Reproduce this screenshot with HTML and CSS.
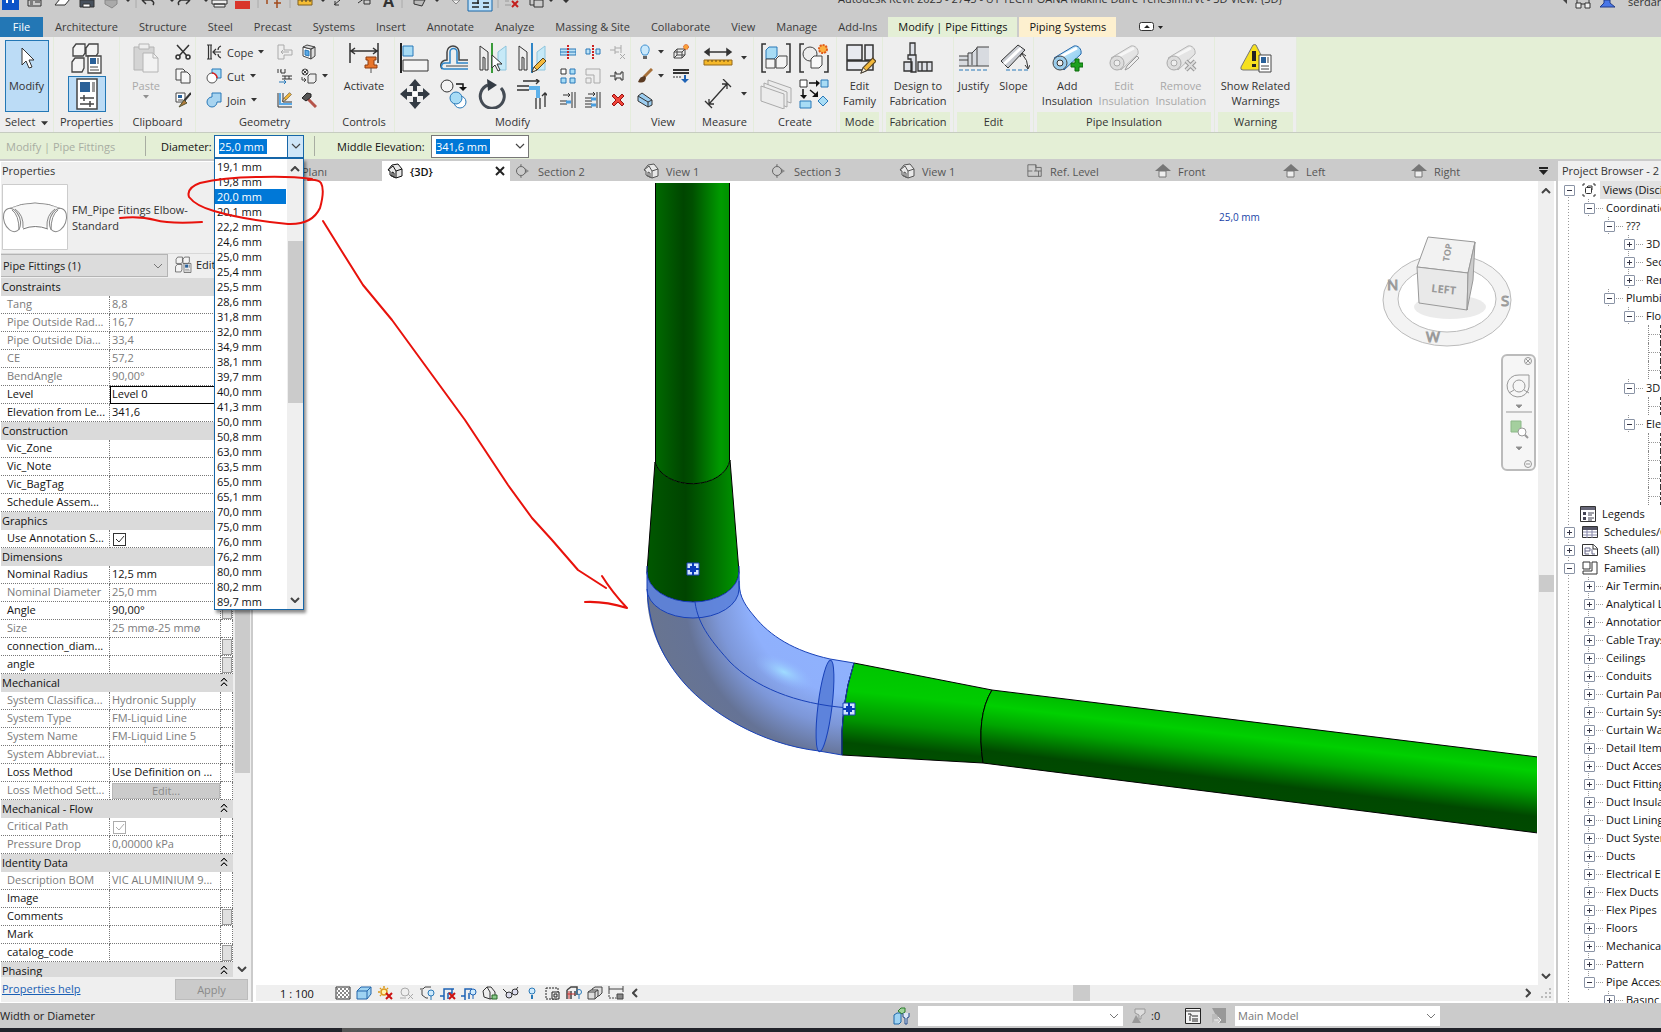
FILE: index.html
```html
<!DOCTYPE html>
<html lang="en">
<head>
<meta charset="utf-8">
<title>Autodesk Revit 2023</title>
<link rel="stylesheet" href="styles.css">
</head>
<body>
<svg class="defs" aria-hidden="true">
  <defs>
    <linearGradient id="pv" x1="0" x2="1" y1="0" y2="0"><stop offset="0" stop-color="#006a00"/><stop offset=".38" stop-color="#004600"/><stop offset=".5" stop-color="#005000"/><stop offset=".88" stop-color="#009c00"/><stop offset="1" stop-color="#009000"/></linearGradient>
    <linearGradient id="tv" x1="0" x2="1" y1="0" y2="0"><stop offset="0" stop-color="#005800"/><stop offset=".42" stop-color="#004400"/><stop offset=".6" stop-color="#005c00"/><stop offset="1" stop-color="#009800"/></linearGradient>
    <linearGradient id="ph" gradientUnits="userSpaceOnUse" x1="1000" y1="541" x2="991" y2="616"><stop offset="0" stop-color="#00bc00"/><stop offset=".2" stop-color="#00d000"/><stop offset=".45" stop-color="#00a400"/><stop offset=".8" stop-color="#004800"/><stop offset="1" stop-color="#004a00"/></linearGradient>
    <linearGradient id="th" gradientUnits="userSpaceOnUse" x1="668" y1="488" x2="658" y2="584"><stop offset="0" stop-color="#00c400"/><stop offset=".3" stop-color="#00cc00"/><stop offset=".6" stop-color="#009400"/><stop offset=".84" stop-color="#004c00"/><stop offset="1" stop-color="#005000"/></linearGradient>
    <radialGradient id="el" gradientUnits="userSpaceOnUse" cx="598" cy="408" r="210"><stop offset="0" stop-color="#8fb4ff"/><stop offset=".5" stop-color="#8fb0fc"/><stop offset=".65" stop-color="#7d97d8"/><stop offset=".8" stop-color="#657396"/><stop offset="1" stop-color="#69758f"/></radialGradient>
    <radialGradient id="hl"><stop offset="0" stop-color="#9fdcff"/><stop offset="1" stop-color="#93b8ff" stop-opacity="0"/></radialGradient>
    <linearGradient id="bl" x1="0" x2="1" y1="0" y2="1"><stop offset="0" stop-color="#d4f0fc"/><stop offset="1" stop-color="#7cc4ee"/></linearGradient>
    <symbol id="chev" viewBox="0 0 10 6"><path d="M1 1l4 4 4-4" fill="none" stroke="#444" stroke-width="1.2"/></symbol>
    <symbol id="chevb" viewBox="0 0 10 6"><path d="M1 1l4 4 4-4" fill="none" stroke="#444" stroke-width="2"/></symbol>
    <symbol id="arr" viewBox="0 0 6 4"><path d="M0 0h6L3 3.500z" fill="#333"/></symbol>
    <symbol id="dbl" viewBox="0 0 8 10"><path d="M1 4l3-3 3 3M1 8.500l3-3 3 3M1 4.500l3-3 3 3M1 9l3-3 3 3" fill="none" stroke="#111" stroke-width=".9"/></symbol>
    <symbol id="house3" viewBox="0 0 16 16"><path d="M1 7l4-5 6-1 4 5v7l-6 2-6-3V8z" fill="#e8e8e8" stroke="currentColor"/><path d="M1 7l5-4 3 5v7M9 8l6-2M5 14V9l2 1v5" fill="none" stroke="currentColor"/></symbol>
    <symbol id="sect" viewBox="0 0 16 16"><path d="M5 2l9 6-9 6z" fill="#8c8c8c"/><circle cx="6" cy="8" r="4.500" fill="#ccc" stroke="#666"/><path d="M6 1v3M6 12v3" stroke="#777"/></symbol>
    <symbol id="plan" viewBox="0 0 18 16"><path d="M1 1h9v3h6v10H1zM10 1v7M1 8h5M13 8v6M8 8h8" fill="none" stroke="#666"/></symbol>
    <symbol id="elev" viewBox="0 0 16 16"><path d="M0 8l8-7 8 7z" fill="#777"/><path d="M4 8h7v6H4z" fill="#eee" stroke="#777"/></symbol>
    <symbol id="pencil" viewBox="0 0 16 16"><path d="M1 15l2-5L12 1l3 3-9 9z" fill="#f3b93c" stroke="#5a4420"/><path d="M1 15l2-5 3 3z" fill="#fff2d8" stroke="#333" stroke-width=".8"/></symbol>
    <symbol id="pipe" viewBox="0 0 32 32"><path d="M3 14L23 2c4-1 8 3 7 8L13 26z" fill="url(#bl)" stroke="#2467ab"/><path d="M9 13L26 4" stroke="#fff" stroke-width="3"/><circle cx="9" cy="19" r="7" fill="#9bcdec" stroke="#444"/><circle cx="9" cy="19" r="3" fill="#eee" stroke="#333"/></symbol>
    <symbol id="pipeg" viewBox="0 0 32 32"><path d="M3 14L23 2c4-1 8 3 7 8L13 26z" fill="#e4e4e4" stroke="#b5b5b5"/><path d="M9 13L26 4" stroke="#f6f6f6" stroke-width="3"/><circle cx="9" cy="19" r="7" fill="#ddd" stroke="#aaa"/><circle cx="9" cy="19" r="3" fill="#eee" stroke="#aaa"/></symbol>
    <symbol id="blocks" viewBox="0 0 32 32"><path d="M2 6l3-4h9v9l-2 3H2zM15 6l3-4h9v9l-2 3H15zM1 20l3-4h9v10l-2 4H1z" fill="#f4f4f4" stroke="#444" stroke-width="1.300"/><path d="M17 14h13v17H17z" fill="#fff" stroke="#444" stroke-width="1.300"/><path d="M19 16h6v6h-6z" fill="#2a6199"/><path d="M26 16h2v6h-2z" fill="#999"/><path d="M19 25h8M19 28h9" stroke="#444"/></symbol>
  </defs>
</svg>

<header class="titlebar">
  <div class="quick">
    <svg width="570" height="17" viewBox="0 0 570 17" fill="none" stroke="#333">
      <path d="M2 0h17v10H2z" fill="#0a53c8" stroke="none"/><path d="M7 0v3M13 0v3" stroke="#fff" stroke-width="2"/>
      <path d="M28 0h13v6H28zM30 2h3M35 2h5M30 4h3"/><path d="M55 5l5-6h10l-5 6z" fill="#fff"/><path d="M80 0h14v7H80z" fill="#47505c"/><path d="M83 4h7v3h-7z" fill="#fff"/>
      <path d="M105 0h12v4l-5 4-7-4z" fill="#aaa" stroke="#888"/><path d="M142 0l4-4M142 0l4 4M143 0h8q4 2 2 5M190 0l-4 4M189 0h-8q-4 2-2 5" stroke-width="1.500"/>
      <path d="M212 0h15v4h-15zM214 4h11v3h-11z" fill="#eee"/><path d="M235 1h15v8h-15z" fill="#d9352b" stroke="none"/>
      <path d="M267 0v4M277 0v4M274 3h7M277 3v5" stroke="#a34b1c" stroke-width="1.500"/><path d="M298 0h14v5h-14z" fill="#f5bd35" stroke="#806020"/><path d="M302 0v2M306 0v2M310 0v2"/>
      <path d="M334 5l6-5M335 1v4h4M358 3l7-5M364 0h6v4h-6z"/><path d="M414 0h11l-3 6-8-2z" fill="#bbb"/><path d="M452 0l4 4 4-4z" fill="#eee" stroke="#888"/>
      <path d="M468-2h24v13h-24z" fill="#bfe0f8" stroke="#1666a8"/><path d="M472 3h7M483 3h6M472 7h7M483 7h6M478 0v4" stroke="#222" stroke-width="1.500"/>
      <path d="M505 5h6M505 1h4" stroke="#999"/><path d="M512 1l6 6M518 1l-6 6" stroke="#c3201e" stroke-width="2"/><path d="M530-1v6h4M534 0h9v7h-9z"/>
      <path d="M126 0h4l-2 2zM170 0h4l-2 2zM204 0h4l-2 2zM321 0h4l-2 2zM435 0h4l-2 2zM549 0h4l-2 2zM563 0h6l-3 3z" fill="#333" stroke="none"/>
      <path d="M136 0v8M258 0v8M290 0v8M402 0v8M498 0v8" stroke="#aaa"/>
    </svg>
    <b class="qa-text">A</b>
  </div>
  <div class="doc-title">Autodesk Revit 2023 - 2745 - UT TECHPOANA Makine Daire Yenesimi.rvt - 3D View: {3D}</div>
  <div class="account">
    <svg width="54" height="12" viewBox="0 0 54 12"><path d="M4 0v4L0 0z" fill="#444"/><g fill="#eee" stroke="#333"><path d="M13 3h5v5h-5zM22 3h5v5h-5zM14 3V0M26 3V0M18 4h4"/></g><path d="M37 7l4-4V0h6v3l5 4z" fill="#4876e8" stroke="#223c88"/></svg>
    <span>serdar.d</span>
  </div>
</header>

<nav class="tabs">
  <button class="tab file">File</button>
  <button class="tab">Architecture</button><button class="tab">Structure</button><button class="tab">Steel</button><button class="tab">Precast</button><button class="tab">Systems</button><button class="tab">Insert</button><button class="tab">Annotate</button><button class="tab">Analyze</button><button class="tab">Massing &amp; Site</button><button class="tab">Collaborate</button><button class="tab">View</button><button class="tab">Manage</button><button class="tab">Add-Ins</button>
  <button class="tab active">Modify | Pipe Fittings</button>
  <button class="tab sys">Piping Systems</button>
  <button class="tab min" aria-label="Minimize ribbon"><svg width="25" height="10" viewBox="0 0 25 10"><rect x=".5" y=".5" width="14" height="8" rx="2" fill="#fff" stroke="#333"/><path d="M5 6h6L8 3zM19 4h5l-2.500 3z" fill="#222"/></svg></button>
</nav>

<section class="ribbon">
  <div class="group g-select">
    <div class="body"><button class="big on"><svg width="32" height="32" viewBox="0 0 32 32"><path d="M11 6v17l4-4 3 7 3-1-3-7h5z" fill="#fff" stroke="#333"/></svg><span>Modify</span></button></div>
    <div class="label">Select&nbsp; <svg width="7" height="5"><use href="#arr"/></svg></div>
  </div>
  <div class="group g-props">
    <div class="body stack"><button class="ic tall" aria-label="Type properties"><svg width="32" height="32"><use href="#blocks"/></svg></button>
      <button class="ic tall on" aria-label="Properties"><svg width="32" height="32" viewBox="0 0 32 32"><path d="M6 1h20v30H6z" fill="#fff" stroke="#444" stroke-width="1.500"/><path d="M9 4h10v10H9z" fill="#2a6199"/><path d="M21 4h3v10h-3z" fill="#999"/><path d="M9 20h14M9 26h14M13 17v6M19 23v6" stroke="#444" stroke-width="1.500"/></svg></button></div>
    <div class="label">Properties</div>
  </div>
  <div class="group g-clip">
    <div class="body"><button class="big dim"><svg width="32" height="32" viewBox="0 0 32 32"><path d="M4 5h20v23H4z" fill="#d4d4d4" stroke="#b4b4b4"/><path d="M9 2h10v5H9z" fill="#eee" stroke="#b4b4b4"/><path d="M13 11h10l5 5v14H13z" fill="#f2f2f2" stroke="#b4b4b4"/><path d="M23 11v5h5" fill="none" stroke="#b4b4b4"/></svg><span>Paste</span><svg class="under" width="6" height="4"><use href="#arr"/></svg></button>
      <div class="col">
        <button class="ic" aria-label="Cut to clipboard"><svg width="16" height="16" viewBox="0 0 16 16" fill="none" stroke="#333" stroke-width="1.500"><path d="M2 1l10 11M14 1L4 12"/><circle cx="3" cy="13" r="2"/><circle cx="13" cy="13" r="2"/></svg></button>
        <button class="ic" aria-label="Copy"><svg width="16" height="16" viewBox="0 0 16 16" fill="#f6f6f6" stroke="#444"><path d="M1 1h7l2 2v9H1z"/><path d="M6 4h6l3 3v8H6z"/></svg></button>
        <button class="ic" aria-label="Match type"><svg width="16" height="16" viewBox="0 0 16 16"><path d="M1 1h9v9H1z" fill="#fff" stroke="#444"/><path d="M3 3h4v3H3z" fill="#2a6199"/><path d="M3 8h5" stroke="#444"/><path d="M16 1L9 9" stroke="#333" stroke-width="2"/><path d="M9 8l-5 7 8-4z" fill="#b07a3a" stroke="#553"/></svg></button>
      </div></div>
    <div class="label">Clipboard</div>
  </div>
  <div class="group g-geo">
    <div class="body">
      <div class="col wide">
        <button class="txt"><svg width="16" height="16" viewBox="0 0 16 16" fill="none" stroke="#333" stroke-width="1.200"><path d="M1 1h5M1 15h5M2.500 1v14M5 1v14M15 2q-3 1-3 4M15 14q-3-1-3-4M7 8h8M10 5L7 8l3 3"/></svg><span>Cope</span><svg class="ar" width="6" height="4"><use href="#arr"/></svg></button>
        <button class="txt"><svg width="16" height="16" viewBox="0 0 16 16"><path d="M6 1h9v9H6z" fill="#a8dcf5" stroke="#2979b8"/><circle cx="6" cy="10" r="5" fill="#fff" stroke="#555"/><path d="M6 5a5 5 0 0 1 5 5" fill="none" stroke="#d22" stroke-width="1.500"/></svg><span>Cut</span><svg class="ar" width="6" height="4"><use href="#arr"/></svg></button>
        <button class="txt"><svg width="16" height="16" viewBox="0 0 16 16"><path d="M6 5V1h9v9h-4a5 5 0 1 1-5-5z" fill="#a8d4f0" stroke="#2979b8"/></svg><span>Join</span><svg class="ar" width="6" height="4"><use href="#arr"/></svg></button>
      </div>
      <div class="col">
        <button class="ic" aria-label="Join roof"><svg width="16" height="16" viewBox="0 0 16 16" fill="#eee" stroke="#aaa"><path d="M1 1h6v5h8v5H7v4H1z"/><path d="M12 8H4M6 6L4 8l2 2"/></svg></button>
        <button class="ic" aria-label="Beam joins"><svg width="16" height="16" viewBox="0 0 16 16" fill="none" stroke="#333"><path d="M1 1v4M4 1v4h4V1M3 3h1M5 8h10M5 11h10" /><path d="M2 14h7M7 12l2 2-2 2" stroke="#2979b8"/><path d="M8 8v3M12 8v3"/></svg></button>
        <button class="ic" aria-label="Wall joins"><svg width="16" height="16" viewBox="0 0 16 16"><path d="M1 1v14h14M6 1v9h9" stroke="#333" fill="none" /><path d="M3 1v11h12" stroke="#5aa9e6" stroke-width="2" fill="none"/><use href="#pencil" x="5" y="0" width="10" height="10"/></svg></button>
      </div>
      <div class="col mid">
        <button class="ic" aria-label="Split face"><svg width="16" height="16" viewBox="0 0 16 16" stroke="#444"><path d="M2 3l8 2v10l-8-3z" fill="#fff"/><path d="M2 3l4-2 8 2-4 2zM14 3v9l-4 3V5z" fill="#ddd"/><path d="M4 6l4 1v5l-4-1z" fill="#5aa9e6" stroke="#2979b8"/></svg></button>
        <button class="ic" aria-label="Demolish joins"><svg width="16" height="16" viewBox="0 0 16 16" fill="none" stroke="#444"><circle cx="4" cy="4" r="3"/><path d="M2 2l4 4M6 2L2 6M7 8l2-2h6v7l-2 2H7zM1 9v3h4M3 10l2 2-2 2"/></svg><svg class="ar" width="6" height="4"><use href="#arr"/></svg></button>
        <button class="ic" aria-label="Demolish"><svg width="16" height="16" viewBox="0 0 16 16"><path d="M7 7l8 8" stroke="#b5544a" stroke-width="3"/><path d="M1 6l5-5 4 1v3L5 9z" fill="#555" stroke="#222"/></svg></button>
      </div>
    </div>
    <div class="label">Geometry</div>
  </div>
  <div class="group g-ctl">
    <div class="body"><button class="big"><svg width="32" height="32" viewBox="0 0 32 32"><path d="M2 1v20M30 1v20M3 9h26M7 6L3 9l4 3M25 6l4 3-4 3" fill="none" stroke="#333" stroke-width="1.500"/><path d="M18 15h10v3h-2v5h3v3H17v-3h3v-5h-2z" fill="#e8762c" stroke="#8e3d10"/><path d="M23 26v5" stroke="#555"/></svg><span>Activate</span></button></div>
    <div class="label">Controls</div>
  </div>
  <div class="group g-mod">
    <div class="body">
      <div class="cells four">
        <button class="ic" aria-label="Align"><svg width="30" height="30" viewBox="0 0 30 30"><path d="M1 0v30" stroke="#222" stroke-width="2"/><path d="M3 3h10v10H3z" fill="#a8dcf5" stroke="#2979b8"/><path d="M3 17h25v11H3z" fill="#f4f4f4" stroke="#333"/></svg></button>
        <button class="ic" aria-label="Offset"><svg width="30" height="30" viewBox="0 0 30 30" fill="none"><path d="M3 26c-3-5 0-9 5-9V9a6 6 0 0 1 12 0v8h9" stroke="#444" stroke-width="1.500"/><path d="M29 26H5c-4 0-3-6 1-6h5V9a3 3 0 0 1 7 0v11h11" stroke="#2e85c7" stroke-width="1.500"/><path d="M29 23H7" stroke="#444"/></svg></button>
        <button class="ic" aria-label="Mirror pick axis"><svg width="30" height="30" viewBox="0 0 30 30"><path d="M2 3l8 6v18H7V15l-2-1v13H2z" fill="#eee" stroke="#333"/><path d="M28 3l-8 6v18h8z" fill="#c6e9f7" stroke="#8cc4dd"/><path d="M14 0v30" stroke="#3a9b3a" stroke-width="2"/><path d="M14 12v13l3-3 3 6 2-1-3-6h5z" fill="#fff" stroke="#333"/></svg></button>
        <button class="ic" aria-label="Mirror draw axis"><svg width="30" height="30" viewBox="0 0 30 30"><path d="M2 3l8 6v18H7V15l-2-1v13H2z" fill="#eee" stroke="#333"/><path d="M28 3l-8 6v18h8z" fill="#c6e9f7" stroke="#8cc4dd"/><path d="M15 0v30" stroke="#2e85c7" stroke-width="2"/><use href="#pencil" x="14" y="14" width="16" height="16"/></svg></button>
        <button class="ic" aria-label="Move"><svg width="30" height="30" viewBox="0 0 30 30" fill="#333b44"><path d="M15 0l6 7h-4v5h-4V7H9zM15 30l6-7h-4v-5h-4v5H9zM0 15l7-6v4h5v4H7v4zM30 15l-7-6v4h-5v4h5v4z"/><path d="M13 13h4v4h-4z" fill="#fff"/></svg></button>
        <button class="ic" aria-label="Copy elements"><svg width="30" height="30" viewBox="0 0 30 30" stroke="#2979b8"><circle cx="8" cy="7" r="6" fill="#f4f4f4" stroke="#333"/><path d="M17 5h7v4" fill="none" stroke="#111" stroke-width="1.500"/><path d="M20 8h8l-4 4z" fill="#111" stroke="none"/><circle cx="21" cy="23" r="6" fill="#fff"/><circle cx="17" cy="19" r="6" fill="#a8dcf5"/></svg></button>
        <button class="ic" aria-label="Rotate"><svg width="30" height="30" viewBox="0 0 30 30"><path d="M10 6a12 12 0 1 0 13 3" fill="none" stroke="#444b54" stroke-width="3"/><path d="M9 0l10 6-9 6z" fill="#333b44"/></svg></button>
        <button class="ic" aria-label="Trim to corner"><svg width="30" height="30" viewBox="0 0 30 30" fill="none" stroke="#333" stroke-width="1.300"><path d="M6 2h16M19 0l3 2-3 3M28 28V14M25 17l3-3 3 3M0 7h12M0 11h12M19 19v11M23 19v11"/><path d="M12 9h9v10" stroke="#5db1ea" stroke-width="4"/></svg></button>
      </div>
      <div class="cells three">
        <button class="ic" aria-label="Split"><svg width="16" height="16" viewBox="0 0 16 16"><path d="M0 5h16v6H0z" fill="#bfe3f6" stroke="#2979b8"/><path d="M0 8h16" stroke="#2979b8"/><path d="M8 1v14" stroke="#c22" stroke-width="2" stroke-dasharray="2 1"/></svg></button>
        <button class="ic" aria-label="Split with gap"><svg width="16" height="16" viewBox="0 0 16 16"><path d="M1 5h4v5H1zM11 5h4v5h-4z" fill="#bfe3f6" stroke="#2979b8"/><path d="M8 1v14" stroke="#c22" stroke-width="2" stroke-dasharray="2 1"/></svg></button>
        <button class="ic" aria-label="Unpin"><svg width="16" height="16" viewBox="0 0 16 16" fill="none" stroke="#aaa"><path d="M0 6h5M5 2v8M5 4h6M5 8h4M11 1v8M10 10l5 5M15 10l-5 5"/></svg></button>
        <button class="ic" aria-label="Array"><svg width="16" height="16" viewBox="0 0 16 16" fill="#a8dcf5" stroke="#2979b8"><path d="M1 1h5v5H1z" fill="#fff" stroke="#333"/><path d="M10 1h5v5h-5zM1 10h5v5H1zM10 10h5v5h-5z"/></svg></button>
        <button class="ic" aria-label="Scale"><svg width="16" height="16" viewBox="0 0 16 16" fill="#eee" stroke="#aaa"><path d="M1 1h14v14h-6V7H1z"/><path d="M1 10h5v5H1z"/></svg></button>
        <button class="ic" aria-label="Pin"><svg width="16" height="16" viewBox="0 0 16 16" fill="#eee" stroke="#333"><path d="M0 8h5M5 4v8h1v-2h5v2h2V4h-2v2H6V4z"/></svg></button>
        <button class="ic" aria-label="Trim single"><svg width="16" height="16" viewBox="0 0 16 16" fill="none" stroke="#333"><path d="M3 3h7M8 1l2 2-2 2M0 9h7M0 12h7M12 0v16M15 0v16"/><path d="M6 10h5" stroke="#4a9fe0" stroke-width="3"/></svg></button>
        <button class="ic" aria-label="Trim multiple"><svg width="16" height="16" viewBox="0 0 16 16" fill="none" stroke="#333"><path d="M3 2h7M8 0l2 2-2 2M0 6h7M0 9h7M0 12h7M0 15h7M12 0v16M15 0v16"/><path d="M6 7h5M6 13h5" stroke="#4a9fe0" stroke-width="3"/></svg></button>
        <button class="ic" aria-label="Delete"><svg width="16" height="16" viewBox="0 0 16 16"><path d="M2 4l2-2 4 4 4-4 2 2-4 4 4 4-2 2-4-4-4 4-2-2 4-4z" fill="#f0453a" stroke="#9c1212"/></svg></button>
      </div>
    </div>
    <div class="label">Modify</div>
  </div>
  <div class="group g-view">
    <div class="body">
      <div class="col mid">
        <button class="ic" aria-label="Hide"><svg width="16" height="16" viewBox="0 0 16 16"><path d="M6 11C2 6 4 1 8 1s6 5 2 10z" fill="#c9e8fb" stroke="#3d8fd0"/><path d="M6 12h4v3H6z" fill="#666"/></svg><svg class="ar" width="6" height="4"><use href="#arr"/></svg></button>
        <button class="ic" aria-label="Override"><svg width="16" height="16" viewBox="0 0 16 16"><path d="M15 1L7 9" stroke="#a8713a" stroke-width="3"/><path d="M8 8q-5 0-7 6q7 2 8-4z" fill="#5a3a22"/></svg><svg class="ar" width="6" height="4"><use href="#arr"/></svg></button>
        <button class="ic" aria-label="Selection box"><svg width="16" height="16" viewBox="0 0 16 16" stroke="#333"><path d="M1 4l4-3 10 7v5l-4 2L1 9z" fill="#9ccdf0"/><path d="M1 4l10 6v5M11 10l4-2" fill="none"/></svg></button>
      </div>
      <div class="col">
        <button class="ic" aria-label="Displace"><svg width="16" height="16" viewBox="0 0 16 16"><path d="M1 8l3-3h8v6l-3 3H1z" fill="#eee" stroke="#444"/><path d="M1 8h8v6M9 8l3-3M4 5v6h8M1 14l3-3" fill="none" stroke="#444"/><circle cx="13" cy="3" r="2.500" fill="#f9a23a" stroke="#d3471b" stroke-dasharray="1 1"/></svg></button>
        <button class="ic" aria-label="Linework"><svg width="16" height="16" viewBox="0 0 16 16" stroke="#333"><path d="M0 2h16M0 5h16" stroke-width="2"/><path d="M0 9h9" stroke-dasharray="2 1"/><path d="M12 7v5" stroke="#1e63b5" stroke-width="2"/><path d="M8 11h8l-4 4z" fill="#1e63b5" stroke="none"/></svg></button>
      </div>
    </div>
    <div class="label">View</div>
  </div>
  <div class="group g-meas">
    <div class="body stack">
      <button class="ic tall" aria-label="Measure"><svg width="30" height="30" viewBox="0 0 30 30"><path d="M2 9h26M6 6L2 9l4 3zM24 6l4 3-4 3z" fill="#333" stroke="#333" stroke-width="1.500"/><path d="M1 17h28v5H1z" fill="#f5b829" stroke="#94691a"/><path d="M5 17v2M9 17v2M13 17v2M17 17v2M21 17v2M25 17v2" stroke="#6b4a10"/></svg><svg class="ar" width="6" height="4"><use href="#arr"/></svg></button>
      <button class="ic tall" aria-label="Dimension"><svg width="30" height="30" viewBox="0 0 30 30" fill="none" stroke="#333" stroke-width="1.300"><path d="M2 22l7 7M20 0l8 8M6 25L24 5M6 20v5h5M19 5h5v5"/></svg><svg class="ar" width="6" height="4"><use href="#arr"/></svg></button>
    </div>
    <div class="label">Measure</div>
  </div>
  <div class="group g-create">
    <div class="body">
      <div class="cells two">
        <button class="ic" aria-label="Create assembly"><svg width="30" height="30" viewBox="0 0 30 30"><path d="M5 1H1v28h4M25 1h4v28h-4" fill="none" stroke="#333" stroke-width="1.500"/><path d="M5 7l3-3h8v9l-3 3H5z" fill="#a8dcf5" stroke="#2979b8"/><path d="M5 16h9v9H5zM15 16l3-3h8v9l-3 3h-8z" fill="#f4f4f4" stroke="#444"/></svg></button>
        <button class="ic" aria-label="Create group"><svg width="30" height="30" viewBox="0 0 30 30"><path d="M5 1H1v28h4M25 29h4V12" fill="none" stroke="#333" stroke-width="1.500"/><circle cx="11" cy="11" r="7" fill="#eee" stroke="#444"/><path d="M12 16l3-3h8v9l-3 3h-8z" fill="#f8f8f8" stroke="#444"/><circle cx="24" cy="6" r="4" fill="#fbb040" stroke="#e05a1c" stroke-width="2" stroke-dasharray="2 1"/></svg></button>
        <button class="ic" aria-label="Create parts"><svg width="32" height="30" viewBox="0 0 32 30" fill="#ececec" stroke="#aaa"><path d="M8 1l23 8v15l-23-8z"/><path d="M4 4l23 9v15L4 19z"/><path d="M1 7l23 8v15L1 22z"/></svg></button>
        <button class="ic" aria-label="Create similar"><svg width="30" height="30" viewBox="0 0 30 30"><path d="M1 1h7v7H1z" fill="#fff" stroke="#333"/><path d="M22 1h7v7h-7zM1 22h11v7H1zM24 17l5 5-5 5-5-5z" fill="#a8dcf5" stroke="#2979b8"/><path d="M10 4h8M4 10v8M11 11l6 5" stroke="#111" stroke-width="1.500"/><path d="M17 1l4 3-4 4zM1 16h7l-3 4zM19 12v6h-6z" fill="#111"/></svg></button>
      </div>
    </div>
    <div class="label">Create</div>
  </div>
  <div class="group ctx g-mode">
    <div class="body"><button class="big"><svg width="32" height="32" viewBox="0 0 32 32"><path d="M3 3h15v15H3zM21 3h8v15h-8zM3 19h26v9H3z" fill="#e8eaf0" stroke="#333" stroke-width="1.500"/><use href="#pencil" x="16" y="15" width="17" height="17"/></svg><span>Edit<br>Family</span></button></div>
    <div class="label">Mode</div>
  </div>
  <div class="group ctx g-fab">
    <div class="body"><button class="big"><svg width="32" height="32" viewBox="0 0 32 32" fill="#dfe2e8" stroke="#333" stroke-width="1.300"><path d="M2 20h8v9H2zM16 20h14v9H16zM8 1h5v12H8zM6 13h8v17H9V17H6z"/><path d="M20 20v9M25 20v9"/></svg><span>Design to<br>Fabrication</span></button></div>
    <div class="label">Fabrication</div>
  </div>
  <div class="group ctx g-edit">
    <div class="body"><button class="big"><svg width="32" height="32" viewBox="0 0 32 32"><path d="M1 14h9v-4h4l5-5h12v19H1z" fill="#d8dbe0"/><path d="M1 14h9M10 24V11M10 11h4l5-5M19 24V5h12M1 18h9M14 11v12M1 24h30" fill="none" stroke="#444"/><path d="M1 28h30" stroke="#2979b8" stroke-dasharray="4 2"/></svg><span>Justify</span></button>
      <button class="big"><svg width="32" height="32" viewBox="0 0 32 32"><path d="M3 19L20 3l7 5L10 26z" fill="#c9ccd2" stroke="#333"/><path d="M6 22L23 6" stroke="#fff" stroke-width="3"/><path d="M24 12q6 6 6 14M22 15l2-4 4 3M27 23l3 4 2-4" fill="none" stroke="#333"/><path d="M8 28h23" stroke="#2979b8" stroke-dasharray="4 2"/></svg><span>Slope</span></button></div>
    <div class="label">Edit</div>
  </div>
  <div class="group ctx g-ins">
    <div class="body"><button class="big"><svg width="32" height="32" viewBox="0 0 32 32"><use href="#pipe" y="2"/><path d="M20 21h4v-4h4v4h4v4h-4v4h-4v-4h-4z" fill="#1fa01f" stroke="#0d6b0d"/></svg><span>Add<br>Insulation</span></button>
      <button class="big dim" disabled><svg width="32" height="32" viewBox="0 0 32 32"><use href="#pipeg" y="2"/><path d="M17 28l2-4 10-10 2 2-10 10z" fill="#eee" stroke="#999"/></svg><span>Edit<br>Insulation</span></button>
      <button class="big dim" disabled><svg width="32" height="32" viewBox="0 0 32 32"><use href="#pipeg" y="2"/><path d="M21 19l9 9M30 19l-9 9" stroke="#999" stroke-width="4"/><path d="M21 19l9 9M30 19l-9 9" stroke="#ddd" stroke-width="2"/></svg><span>Remove<br>Insulation</span></button></div>
    <div class="label">Pipe Insulation</div>
  </div>
  <div class="group ctx g-warn">
    <div class="body"><button class="big"><svg width="32" height="32" viewBox="0 0 32 32"><path d="M13 3q2-1 3 0l11 22q0 3-3 3H3q-3 0-2-3z" fill="#f6e01e" stroke="#777"/><path d="M14 9v10M14 22v3" stroke="#222" stroke-width="4"/><path d="M19 13h12v17H19z" fill="#fff" stroke="#444"/><path d="M21 15h5v6h-5z" fill="#2a6199"/><path d="M28 15v6M21 24h8M21 27h8" stroke="#444"/></svg><span>Show Related<br>Warnings</span></button></div>
    <div class="label">Warning</div>
  </div>
</section>

<section class="options">
  <span class="ctxname">Modify | Pipe Fittings</span>
  <span class="vsep"></span>
  <label for="dia" class="l-dia">Diameter:</label>
  <div class="combo open">
    <input id="dia" type="text" value="25,0 mm">
    <button aria-label="Show diameters"><svg width="10" height="6"><use href="#chev"/></svg></button>
    <div class="drop">
      <ul role="listbox" aria-label="Diameter">
        <li>19,1 mm</li><li>19,8 mm</li><li class="sel">20,0 mm</li><li>20,1 mm</li><li>22,2 mm</li><li>24,6 mm</li><li>25,0 mm</li><li>25,4 mm</li><li>25,5 mm</li><li>28,6 mm</li><li>31,8 mm</li><li>32,0 mm</li><li>34,9 mm</li><li>38,1 mm</li><li>39,7 mm</li><li>40,0 mm</li><li>41,3 mm</li><li>50,0 mm</li><li>50,8 mm</li><li>63,0 mm</li><li>63,5 mm</li><li>65,0 mm</li><li>65,1 mm</li><li>70,0 mm</li><li>75,0 mm</li><li>76,0 mm</li><li>76,2 mm</li><li>80,0 mm</li><li>80,2 mm</li><li>89,7 mm</li>
      </ul>
      <div class="vscroll"><svg class="flip" width="10" height="6"><use href="#chevb"/></svg><i></i><svg width="10" height="6"><use href="#chevb"/></svg></div>
    </div>
  </div>
  <span class="vsep"></span>
  <label for="elv" class="l-elv">Middle Elevation:</label>
  <div class="combo elv">
    <input id="elv" type="text" value="341,6 mm">
    <button aria-label="Show elevations"><svg width="10" height="6"><use href="#chev"/></svg></button>
  </div>
</section>

<main>
  <aside class="props">
    <h2>Properties</h2>
    <div class="type">
      <svg width="66" height="66" viewBox="0 0 66 66"><path d="M.500.500h65v65H.500z" fill="#fff" stroke="#ccc"/><path d="M6 25q27-12 54 0M21 45q12-5 25 0" fill="none" stroke="#777"/><path d="M8 24q25-9 50 0L46 43q-12-4-25 0z" fill="#f1f1f1" opacity=".6"/><ellipse cx="10" cy="36" rx="8" ry="12" transform="rotate(-20 10 36)" fill="#fff" stroke="#888"/><ellipse cx="56" cy="36" rx="8" ry="12" transform="rotate(20 56 36)" fill="#fff" stroke="#888"/><path d="M13 25q9 6 8 19M10 26q7 5 7 20M53 25q-9 6-8 19M56 26q-7 5-7 20" fill="none" stroke="#888"/></svg>
      <span>FM_Pipe Fitings Elbow-<br>Standard</span>
    </div>
    <div class="filter">
      <select aria-label="Category"><option>Pipe Fittings (1)</option></select>
      <button><svg width="17" height="17"><use href="#blocks"/></svg> Edit Type</button>
    </div>
    <div class="scrollbox">
      <table>
        <colgroup><col class="c1"><col class="c2"><col class="c3"></colgroup>
        <tbody>
        <tr class="sec"><th colspan="3">Constraints</th></tr>
        <tr class="ro"><td>Tang</td><td>8,8</td><td></td></tr>
        <tr class="ro"><td>Pipe Outside Rad...</td><td>16,7</td><td></td></tr>
        <tr class="ro"><td>Pipe Outside Dia...</td><td>33,4</td><td></td></tr>
        <tr class="ro"><td>CE</td><td>57,2</td><td></td></tr>
        <tr class="ro"><td>BendAngle</td><td>90,00°</td><td></td></tr>
        <tr><td>Level</td><td class="focus">Level 0</td><td></td></tr>
        <tr><td>Elevation from Le...</td><td>341,6</td><td></td></tr>
        <tr class="sec"><th colspan="3">Construction</th></tr>
        <tr><td>Vic_Zone</td><td></td><td></td></tr>
        <tr><td>Vic_Note</td><td></td><td></td></tr>
        <tr><td>Vic_BagTag</td><td></td><td></td></tr>
        <tr><td>Schedule Assem...</td><td></td><td></td></tr>
        <tr class="sec"><th colspan="3">Graphics</th></tr>
        <tr><td>Use Annotation S...</td><td><input type="checkbox" aria-label="Use Annotation Scale" checked></td><td></td></tr>
        <tr class="sec"><th colspan="3">Dimensions</th></tr>
        <tr><td>Nominal Radius</td><td>12,5 mm</td><td></td></tr>
        <tr class="ro"><td>Nominal Diameter</td><td>25,0 mm</td><td></td></tr>
        <tr><td>Angle</td><td>90,00°</td><td><button aria-label="Associate"></button></td></tr>
        <tr class="ro"><td>Size</td><td>25 mmø-25 mmø</td><td></td></tr>
        <tr><td>connection_diam...</td><td></td><td><button aria-label="Associate"></button></td></tr>
        <tr><td>angle</td><td></td><td><button aria-label="Associate"></button></td></tr>
        <tr class="sec"><th colspan="3">Mechanical<svg width="8" height="10"><use href="#dbl"/></svg></th></tr>
        <tr class="ro"><td>System Classifica...</td><td>Hydronic Supply</td><td></td></tr>
        <tr class="ro"><td>System Type</td><td>FM-Liquid Line</td><td></td></tr>
        <tr class="ro"><td>System Name</td><td>FM-Liquid Line 5</td><td></td></tr>
        <tr class="ro"><td>System Abbreviat...</td><td></td><td></td></tr>
        <tr><td>Loss Method</td><td>Use Definition on ...</td><td></td></tr>
        <tr class="ro"><td>Loss Method Sett...</td><td><button class="edit" disabled>Edit...</button></td><td></td></tr>
        <tr class="sec"><th colspan="3">Mechanical - Flow<svg width="8" height="10"><use href="#dbl"/></svg></th></tr>
        <tr class="ro"><td>Critical Path</td><td><input type="checkbox" aria-label="Critical Path" checked disabled></td><td></td></tr>
        <tr class="ro"><td>Pressure Drop</td><td>0,00000 kPa</td><td></td></tr>
        <tr class="sec"><th colspan="3">Identity Data<svg width="8" height="10"><use href="#dbl"/></svg></th></tr>
        <tr class="ro"><td>Description BOM</td><td>VIC ALUMINIUM 9...</td><td></td></tr>
        <tr><td>Image</td><td></td><td></td></tr>
        <tr><td>Comments</td><td></td><td><button aria-label="Associate"></button></td></tr>
        <tr><td>Mark</td><td></td><td></td></tr>
        <tr><td>catalog_code</td><td></td><td><button aria-label="Associate"></button></td></tr>
        <tr class="sec"><th colspan="3">Phasing<svg width="8" height="10"><use href="#dbl"/></svg></th></tr>
        </tbody>
      </table>
      <div class="pscroll"><i></i><svg width="10" height="6"><use href="#chevb"/></svg></div>
    </div>
    <footer><a href="#help">Properties help</a><button disabled>Apply</button></footer>
  </aside>

  <section class="work">
    <nav class="viewtabs">
      <button class="first"><span>Planı</span></button>
      <button class="cur"><svg width="16" height="16"><use href="#house3"/></svg><span>{3D}</span><svg class="x" width="10" height="10" viewBox="0 0 10 10"><path d="M1 1l8 8M9 1L1 9" stroke="#222" stroke-width="2"/></svg></button>
      <button><svg width="16" height="16"><use href="#sect"/></svg><span>Section 2</span></button>
      <button><svg width="16" height="16"><use href="#house3"/></svg><span>View 1</span></button>
      <button><svg width="16" height="16"><use href="#sect"/></svg><span>Section 3</span></button>
      <button><svg width="16" height="16"><use href="#house3"/></svg><span>View 1</span></button>
      <button><svg width="16" height="16"><use href="#plan"/></svg><span>Ref. Level</span></button>
      <button><svg width="16" height="16"><use href="#elev"/></svg><span>Front</span></button>
      <button><svg width="16" height="16"><use href="#elev"/></svg><span>Left</span></button>
      <button><svg width="16" height="16"><use href="#elev"/></svg><span>Right</span></button>
      <svg class="more" width="9" height="8" viewBox="0 0 9 8"><path d="M0 1h9" stroke="#222" stroke-width="2"/><path d="M0 3h9L4.500 8z" fill="#222"/></svg>
    </nav>
    <div class="canvas">
      <svg class="model" viewBox="0 0 1283 804" preserveAspectRatio="xMinYMin slice">
        <path d="M401 2h75v277A38 27 0 0 1 401 281z" fill="url(#pv)"/>
        <path d="M401.500 2v279M475.500 2v277" stroke="#000"/>
        <path d="M401 281A38 27 0 0 0 476 279L485 391A46 30 0 0 1 393 391z" fill="url(#tv)" stroke="#000"/>
        <path d="M393 391V419C396 455 411 480 431 503C455 530 505 563 565 570L588 574Q586 525 600 482L576 478C540 470 516 455 500 435C488 421 486 414 486 400L485 391A46 30 0 0 1 393 391z" fill="url(#el)"/>
        <ellipse cx="530" cy="491" rx="32" ry="13" transform="rotate(25 530 491)" fill="url(#hl)"/>
        <path d="M393 391A46 30 0 0 0 485 391V408A46 29 0 0 1 393 408z" fill="#5d83dc" fill-opacity=".9"/>
        <path d="M393 385V408A46 29 0 0 0 485 408V385M393 391A46 30 0 0 0 485 391" fill="none" stroke="#1841b8"/>
        <ellipse cx="571" cy="525" rx="7" ry="46" transform="rotate(7 571 525)" fill="#5d83dc" stroke="#1841b8"/>
        <path d="M393 408C396 455 411 480 431 503C455 530 505 563 565 570L588 574Q586 525 600 482L576 478C540 470 516 455 500 435C488 421 485 412 485 400M441 421C444 445 460 463 476 481C500 505 540 523 595 527" fill="none" stroke="#1841b8"/>
        <path d="M600 482L738 509Q722 535 729 582L588 574Q586 525 600 482z" fill="url(#th)" stroke="#000"/>
        <path d="M738 509L1284 576v76L729 582Q722 535 738 509z" fill="url(#ph)"/>
        <path d="M1284 576L738 509Q722 535 729 582L1284 652" fill="none" stroke="#000"/>
        <path d="M588 574Q586 525 600 482" fill="none" stroke="#1841b8"/>
        <g id="grip"><path d="M433 382h12v12h-12z" fill="#cfe4ff" stroke="#1841b8"/><path d="M439 382v12M433 388h12" stroke="#0a3bb8" stroke-width="2"/><path d="M436 385h6v6h-6z" fill="#0a3bb8"/></g>
        <use href="#grip" x="156" y="140"/>
        <text x="965" y="40" class="dimtext">25,0 mm</text>
        <g class="cube">
          <ellipse cx="1193" cy="119" rx="64" ry="46" fill="#f3f3f3" stroke="#bbb"/><ellipse cx="1193" cy="118" rx="49" ry="33" fill="#fff" stroke="#bbb"/>
          <ellipse cx="1196" cy="126" rx="36" ry="12" fill="#ddd" opacity=".6"/>
          <path d="M1174 56l47 5-7 31-51-6z" fill="#f2f2f2" stroke="#999"/><path d="M1163 86l51 6-1 37-48-7z" fill="#e9e9e9" stroke="#999"/><path d="M1221 61l-7 31-1 37 6-30z" fill="#ccc" stroke="#999"/>
          <text x="1177" y="111" class="face" transform="rotate(6 1177 111)">LEFT</text><text x="1195" y="81" class="face sm" transform="rotate(-80 1195 81)">TOP</text>
          <text x="1133" y="109" class="compass">N</text><text x="1247" y="125" class="compass">S</text><text x="1172" y="161" class="compass">W</text>
        </g>
      </svg>
      <div class="navbar">
        <svg width="36" height="117" viewBox="0 0 36 117" fill="none" stroke="#999"><rect x="1" y="1" width="33" height="115" rx="5" fill="#f6f6f6" stroke="#bbb" stroke-width="2"/><circle cx="27" cy="7" r="3.500"/><path d="M25 5l4 4M29 5l-4 4"/><path d="M18 21h10v12a11 11 0 1 1-10-12z"/><circle cx="18" cy="32" r="6"/><path d="M8 39l5-3M28 39l-5-3"/><path d="M15 51h6l-3 3z" fill="#888"/><path d="M5 58h26"/><path d="M10 67h10v11H10z" fill="#a4cf9e" stroke="#8cb888"/><circle cx="21" cy="78" r="4" fill="#fff"/><path d="M24 81l3 3" stroke-width="2"/><path d="M15 93h6l-3 3z" fill="#888"/><circle cx="27" cy="110" r="3.500"/><path d="M25 110h4"/></svg>
      </div>
      <div class="cscroll"><svg class="flip" width="10" height="6"><use href="#chevb"/></svg><i></i><svg width="10" height="6"><use href="#chevb"/></svg></div>
    </div>
    <div class="viewbar">
      <button class="scale">1 : 100</button>
      <div class="vicons">
        <button aria-label="Detail level"><svg width="16" height="14" viewBox="0 0 16 14"><path d="M1 1h14v12H1z" fill="#fff" stroke="#333"/><path d="M1 4l3-3M1 8l7-7M1 12l11-11M4 13L15 2M8 13l7-7M12 13l3-3M1 10l3 3M1 6l7 7M1 2l11 11M4 1l11 11M8 1l7 7M12 1l3 3" stroke="#888"/></svg></button>
        <button aria-label="Visual style"><svg width="16" height="14" viewBox="0 0 16 14"><path d="M1 5l4-4h10v7l-4 5H1z" fill="#9fd3f2" stroke="#2467ab"/><path d="M1 5h10v8M11 5l4-4" fill="none" stroke="#2467ab"/></svg></button>
        <button aria-label="Sun path"><svg width="16" height="14" viewBox="0 0 16 14"><circle cx="7" cy="6" r="3" fill="#fff3b0" stroke="#dc9a1c" stroke-width="1.500"/><path d="M7 0v2M1 6h2M3 2l1 1M11 2l-1 1M3 10l1-1" stroke="#dc9a1c" stroke-width="1.500"/><path d="M9 7l6 6M15 7l-6 6" stroke="#c11" stroke-width="2"/></svg></button>
        <button aria-label="Shadows"><svg width="16" height="14" viewBox="0 0 16 14" fill="none" stroke="#aaa"><circle cx="7" cy="6" r="4"/><path d="M2 12h6M10 8l5 5M15 8l-5 5"/></svg></button>
        <button aria-label="Rendering"><svg width="16" height="14" viewBox="0 0 16 14" fill="none" stroke="#444"><path d="M1 3h3l2-2h6M3 4v5l4 3h2"/><circle cx="12" cy="7" r="3" fill="#cfeafc" stroke="#2979b8"/><path d="M12 10v4" stroke="#2979b8"/></svg></button>
        <button aria-label="Crop view"><svg width="16" height="14" viewBox="0 0 16 14" fill="none" stroke="#1e63b5"><path d="M0 10h4V3h10M4 3v11M8 7v6M12 3v5M8 7h4" stroke-width="1.500"/><path d="M9 7l6 6M15 7l-6 6" stroke="#c11" stroke-width="2"/></svg></button>
        <button aria-label="Crop region"><svg width="16" height="14" viewBox="0 0 16 14" fill="none" stroke="#1e63b5"><path d="M0 10h4V3h7M4 3v11M8 7v6" stroke-width="1.500"/><circle cx="12" cy="6" r="3" fill="#cfeafc"/><path d="M12 9v4"/></svg></button>
        <button aria-label="Lock view"><svg width="16" height="14" viewBox="0 0 16 14"><path d="M1 5l4-4h4l4 5v6l-5 1-6-2z" fill="#eee" stroke="#333"/><path d="M1 5l4-4 3 5v7" fill="none" stroke="#333"/><path d="M10 9h5v4h-5z" fill="#8bc98b" stroke="#276b27"/></svg></button>
        <button aria-label="Temporary hide"><svg width="16" height="14" viewBox="0 0 16 14" fill="#dde" stroke="#333"><path d="M0 3l5 5M15 1l-3 4" /><ellipse cx="6" cy="9" rx="3" ry="3"/><ellipse cx="12" cy="6" rx="3" ry="3"/></svg></button>
        <button aria-label="Reveal hidden"><svg width="16" height="14" viewBox="0 0 16 14"><circle cx="8" cy="5" r="3" fill="#cfeafc" stroke="#2979b8"/><path d="M7 9h2v4H7z" fill="#2979b8"/></svg></button>
        <button aria-label="View properties"><svg width="16" height="14" viewBox="0 0 16 14" fill="#eee" stroke="#222"><path d="M1 2h12v11H1z" stroke-dasharray="2 1"/><path d="M7 6h7v7H7zM9 8h3v3H9z"/></svg></button>
        <button aria-label="Analytical model"><svg width="16" height="14" viewBox="0 0 16 14" fill="none" stroke="#444"><path d="M1 4l4-3h6v8M1 4v9M5 5v8M9 5v5" stroke-width="1.500"/><path d="M1 8h8M3 5v8" stroke="#c33"/><circle cx="13" cy="6" r="2.500" stroke="#2979b8"/><path d="M13 9v4" stroke="#2979b8"/></svg></button>
        <button aria-label="Displacement"><svg width="16" height="14" viewBox="0 0 16 14" fill="#ddd" stroke="#444"><path d="M5 3l3-2h7v6l-3 3H5z"/><path d="M1 6l3-2h7v6l-3 3H1zM1 6h7v7M8 6l3-2"/></svg></button>
        <button aria-label="Constraints"><svg width="16" height="14" viewBox="0 0 16 14" fill="none" stroke="#444"><path d="M1 0v6M15 0v6M1 3h14"/><path d="M1 6v6h7" stroke-dasharray="2 1"/><path d="M9 8h6v5H9z" fill="#888"/></svg></button>
      </div>
      <svg class="lt" width="6" height="10" viewBox="0 0 6 10"><path d="M5 1L1 5l4 4" fill="none" stroke="#444" stroke-width="2"/></svg>
      <div class="hscroll"><i></i></div>
      <svg width="6" height="10" viewBox="0 0 6 10"><path d="M1 1l4 4-4 4" fill="none" stroke="#444" stroke-width="2"/></svg>
      <svg class="sizer" width="10" height="10" viewBox="0 0 10 10"><path d="M8 0h2v2H8zM4 4h2v2H4zM8 4h2v2H8zM0 8h2v2H0zM4 8h2v2H4zM8 8h2v2H8z" fill="#bbb"/></svg>
    </div>
  </section>

  <aside class="browser">
    <h2>Project Browser - 2</h2>
    <ul class="tree">
      <li class="l0 minus root"><svg width="14" height="14" viewBox="0 0 14 14" fill="none" stroke="#333"><path d="M3 1H1v2M11 1h2v2M3 13H1v-2M11 13h2v-2"/><rect x="3.500" y="4.500" width="6" height="6" rx="1"/><path d="M5 4l1-1h4v4l-1 1"/></svg><span class="hi">Views (Discipline)</span></li>
      <li class="l1 minus">Coordination</li>
      <li class="l2 minus">???</li>
      <li class="l3 plus">3D Views</li>
      <li class="l3 plus">Sections</li>
      <li class="l3 plus">Renderings</li>
      <li class="l2 minus">Plumbing</li>
      <li class="l3 minus">Floor Plans</li>
      <li class="leaf"></li><li class="leaf"></li><li class="leaf"></li>
      <li class="l3 minus">3D Views</li>
      <li class="leaf"></li>
      <li class="l3 minus">Elevations</li>
      <li class="leaf"></li><li class="leaf"></li><li class="leaf"></li><li class="leaf"></li>
      <li class="l0"><svg width="16" height="16" viewBox="0 0 16 16"><path d="M.500.500h15v15H.500z" fill="#fff" stroke="#333"/><path d="M1 1h14v3H1z" fill="#667"/><path d="M3 6h3v3H3zM3 11h3v3H3z" fill="#445"/><path d="M8 7h6M8 9h4M8 12h6M8 14h4" stroke="#445"/></svg>Legends</li>
      <li class="l0 plus"><svg width="16" height="16" viewBox="0 0 16 16"><path d="M.500 2.500h15v11H.500z" fill="#fff" stroke="#333"/><path d="M1 3h14v3H1z" fill="#556"/><path d="M1 8h14M1 11h14M5 6v8M10 6v8" stroke="#88a"/></svg>Schedules/Quantities</li>
      <li class="l0 plus"><svg width="16" height="16" viewBox="0 0 16 16" fill="#fff" stroke="#333"><path d="M.500 2.500h11l4 4v7H.500z"/><path d="M3 6h5v3H3zM3 9v3h4M10 7v5h3" stroke="#668"/><path d="M11 2v5h4"/></svg>Sheets (all)</li>
      <li class="l0 minus"><svg width="16" height="16" viewBox="0 0 16 16" fill="#fff" stroke="#333"><path d="M1 2h7v7H1zM10 2h5v12H1v-3h9z"/></svg>Families</li>
      <li class="l1 plus">Air Terminals</li><li class="l1 plus">Analytical Links</li><li class="l1 plus">Annotation Symbols</li><li class="l1 plus">Cable Trays</li><li class="l1 plus">Ceilings</li><li class="l1 plus">Conduits</li><li class="l1 plus">Curtain Panels</li><li class="l1 plus">Curtain Systems</li><li class="l1 plus">Curtain Wall</li><li class="l1 plus">Detail Items</li><li class="l1 plus">Duct Accessories</li><li class="l1 plus">Duct Fittings</li><li class="l1 plus">Duct Insulations</li><li class="l1 plus">Duct Linings</li><li class="l1 plus">Duct Systems</li><li class="l1 plus">Ducts</li><li class="l1 plus">Electrical Equipment</li><li class="l1 plus">Flex Ducts</li><li class="l1 plus">Flex Pipes</li><li class="l1 plus">Floors</li><li class="l1 plus">Mechanical Equipment</li><li class="l1 plus">Pattern</li><li class="l1 minus">Pipe Accessories</li><li class="l2 plus">Basınc</li>
    </ul>
  </aside>
</main>

<footer class="status">
  <span class="msg">Width or Diameter</span>
  <svg width="17" height="18" viewBox="0 0 17 18"><path d="M1 8l3-2h4v9l-2 2H1z" fill="#9fd3f2" stroke="#1c66a8"/><path d="M5 4l3-3h4v4l-3 2z" fill="#9ed49a" stroke="#2b7a2b"/><path d="M10 6v4l2 1v6h2v-6l2-1V6" fill="#dde6f5" stroke="#234a8a"/></svg>
  <select class="s1" aria-label="Worksets"><option></option></select>
  <svg width="16" height="16" viewBox="0 0 16 16"><path d="M4 1h10v4l-4 3v3H8V7L4 5z" fill="#ddd" stroke="#999"/><path d="M1 15l4-8 5 8z" fill="#999"/></svg>
  <span class="cnt">:0</span>
  <svg class="ed" width="16" height="16" viewBox="0 0 16 16"><path d="M.500.500h15v15H.500z" fill="#f4f4f4" stroke="#222"/><path d="M1 3h14M3 6h3v2M7 8h6M5 8v5M7 11h6M7 13h6" stroke="#222" fill="none"/></svg>
  <svg width="16" height="16" viewBox="0 0 16 16"><path d="M1 0h14v15H9z" fill="#999"/><path d="M1 15V6h4l4 5H6" fill="#bbb"/><path d="M3 12h7M7 9l3 3-3 3" stroke="#eee" fill="none"/></svg>
  <select class="s2" aria-label="Design option"><option>Main Model</option></select>
</footer>
<div class="taskbar"></div>

<svg class="ink" width="660" height="620" viewBox="0 0 660 620" fill="none" stroke="#e8120c" stroke-width="2" stroke-linecap="round" stroke-linejoin="round">
  <path d="M120 218Q140 216 155 220T202 222"/>
  <path d="M312 179Q290 176 260 177Q225 177 200 183Q186 188 189 197Q196 206 214 211Q245 220 288 224Q312 225 320 208Q325 190 321 183Q318 179 308 180"/>
  <path d="M323 221L341 250L363 285L392 320Q425 365 465 420L508 485L532 518L552 540L578 570L606 588M602 576Q612 592 627 608Q605 601 585 602"/>
</svg>
</body>
</html>
```
FILE: styles.css
```css
* { box-sizing: border-box; }
body { margin: 0; height: 100vh; display: flex; flex-direction: column; overflow: hidden; position: relative; background: #cbcbcb; color: #333; font: 11px/15px "Open Sans", "Noto Sans", sans-serif; }
button, input, select { font: inherit; color: inherit; background: none; border: 0; padding: 0; margin: 0; border-radius: 0; }
ul { list-style: none; margin: 0; padding: 0; }
h2 { margin: 0; font-size: 11px; font-weight: 400; line-height: 20px; height: 20px; }
svg { display: block; flex: none; overflow: hidden; }
.defs { position: absolute; width: 0; height: 0; }

.titlebar { flex: none; height: 17px; display: flex; overflow: hidden; white-space: nowrap; }
.quick { position: relative; width: 838px; flex: none; }
.qa-text { position: absolute; left: 383px; top: -9px; font-size: 16px; line-height: 20px; }
.doc-title { margin-top: -9px; flex: 1; }
.account { display: flex; width: 98px; }
.account span { margin: -6px 0 0 11px; }

.tabs { flex: none; height: 20px; display: flex; white-space: nowrap; }
.tab { padding: 0 10px; margin-right: 1px; line-height: 20px; color: #3a3a3a; }
.file { width: 43px; background: #2377b5; color: #fff; margin-right: 2px; }
.active { background: #e4efd6; color: #111; margin-right: 2px; }
.sys { background: #fdf0cf; color: #111; }
.min { padding: 0 22px; }

.ribbon { flex: none; display: flex; height: 96px; padding-top: 3px; background: #e4efd6; border-bottom: 1px solid #c6ccc0; }
.group { flex: none; display: flex; flex-direction: column; background: #eee; margin-top: -3px; padding-top: 3px; border-right: 1px solid #e4ecdc; }
.body { display: flex; height: 72px; justify-content: center; }
.label { line-height: 20px; height: 20px; text-align: center; white-space: nowrap; }
.label svg { display: inline-block; }
.ctx .label { background: #e4efd6; margin: 1px 3px 0; }
.g-select { width: 54px; } .g-props { width: 66px; } .g-clip { width: 76px; } .g-geo { width: 138px; } .g-ctl { width: 61px; }
.g-mod { width: 236px; } .g-view { width: 65px; } .g-meas { width: 58px; } .g-create { width: 83px; }
.g-mode { width: 46px; } .g-fab { width: 71px; } .g-edit { width: 80px; } .g-ins { width: 181px; } .g-warn { width: 82px; }
.big { display: flex; flex-direction: column; align-items: center; min-width: 40px; padding-top: 2px; white-space: nowrap; }
.big span { margin-top: 4px; }
.g-ins .body { gap: 6px; }
.g-select .big { width: 44px; }
.g-clip .body { justify-content: flex-start; padding-left: 6px; gap: 5px; }
.g-geo .body { justify-content: flex-start; padding-left: 10px; }
.dim { color: #a9a9a9; }
.dim .under { margin-top: 2px; opacity: .5; }
.on { background: #bcdcf6; outline: 1px solid #2377b5; outline-offset: -1px; }
.stack { flex-direction: column; align-items: center; }
.ic { display: flex; height: 24px; width: 20px; align-items: center; justify-content: center; }
.ic.tall { height: 36px; width: 38px; }
.col { display: flex; flex-direction: column; width: 25px; align-items: center; }
.col.mid { width: 36px; align-items: flex-start; }
.col.mid .ic { width: 34px; justify-content: flex-start; padding-left: 4px; }
.mid .ar { margin-left: 5px; }
.col.wide { width: 66px; align-items: flex-start; }
.txt { display: flex; height: 24px; align-items: center; gap: 5px; }
.cells { display: grid; }
.cells.four { grid-template: repeat(2, 36px) / repeat(4, 39px); margin-right: 4px; }
.cells.two { grid-template: repeat(2, 36px) / repeat(2, 38px); }
.cells.three { grid-template: repeat(3, 24px) / repeat(3, 25px); }
.cells .ic { width: auto; height: auto; }
.g-meas .ic { width: 50px; gap: 8px; }

.options { flex: none; height: 26px; display: flex; align-items: center; background: #e4efd6; position: relative; z-index: 2; padding-left: 6px; color: #111; }
.ctxname { width: 139px; color: #a8ada2; white-space: nowrap; }
.vsep { width: 1px; height: 20px; background: #a8ada2; }
.l-dia { width: 68px; padding-left: 15px; white-space: nowrap; }
.l-elv { width: 116px; padding-left: 22px; white-space: nowrap; }
.combo { position: relative; width: 90px; height: 23px; background: #fff; border: 1px solid #1666a8; display: flex; align-items: center; padding-left: 4px; margin-right: 10px; }
.combo.elv { width: 98px; border-color: #777; }
.combo input { width: 48px; height: 15px; background: #0078d7; color: #fff; }
.combo.elv input { width: 54px; }
.combo button { margin-left: auto; width: 16px; height: 21px; display: grid; place-items: center; }
.combo.open button { background: #cfe6f8; border-left: 1px solid #1666a8; }
.drop { position: absolute; left: -1px; top: 22px; width: 90px; height: 452px; overflow: hidden; background: #fff; border: 1px solid #1666a8; display: flex; box-shadow: 2px 3px 3px rgba(0, 0, 0, .45); }
.drop ul { flex: 1; }
.drop li { height: 15px; line-height: 15px; padding-left: 2px; }
.drop .sel { background: #0078d7; color: #fff; margin-right: 1px; }
.vscroll, .cscroll { width: 16px; background: #efefef; display: flex; flex-direction: column; align-items: center; padding: 7px 0 6px; }
.flip { transform: scaleY(-1); }
.vscroll i { width: 15px; height: 162px; margin: 69px 0 auto; background: #cbcbcb; }

main { flex: 1; min-height: 0; display: grid; grid-template-columns: 254px minmax(0, 1fr) 103px; padding-top: 2px; }
.props { display: flex; flex-direction: column; min-height: 0; background: #efefef; border-right: 3px solid #cbcbcb; outline: 1px solid #fff; outline-offset: -1px; }
.props h2 { padding-left: 2px; }
.type { display: flex; gap: 4px; height: 73px; padding: 3px 0 0 2px; border-bottom: 1px solid #d8d8d8; align-items: flex-start; }
.type span { padding-top: 18px; line-height: 16px; white-space: nowrap; }
.filter { display: flex; height: 24px; gap: 7px; white-space: nowrap; align-items: flex-start; color: #222; }
select { appearance: none; padding-left: 3px; background: url("data:image/svg+xml,%3Csvg xmlns='http://www.w3.org/2000/svg' width='10' height='6'%3E%3Cpath d='M1 1l4 4 4-4' fill='none' stroke='%23777'/%3E%3C/svg%3E") no-repeat right 4px center #fff; }
.filter select { width: 168px; height: 23px; background-color: #dcdcdc; border: 1px solid #b4b4b4; border-left: 0; }
.filter button { display: flex; align-items: center; gap: 4px; height: 20px; }
.scrollbox { flex: 1; min-height: 0; overflow: hidden; display: flex; align-items: stretch; }
table { width: 233px; flex: none; table-layout: fixed; border-collapse: separate; border-spacing: 0; align-self: flex-start; color: #111; background: #fff; }
.c1 { width: 110px; } .c2 { width: 111px; } .c3 { width: 12px; }
td, th { height: 18px; padding: 0; font-weight: 400; text-align: left; white-space: nowrap; overflow: hidden; }
td { border-bottom: 1px dotted #777; border-right: 1px dotted #777; padding-left: 2px; line-height: 15px; vertical-align: top; }
td:first-child { padding-left: 7px; }
td:last-child { padding-left: 1px; }
th { background: #dadada; padding-left: 2px; line-height: 18px; }
th svg { float: right; margin: 3px 5px 0 0; }
.ro { color: #7b7b7b; }
td.focus { outline: 1px solid #000; outline-offset: -1px; }
td input[type=checkbox] { appearance: none; display: block; width: 13px; height: 13px; margin: 3px 1px 0; border: 1px solid #333; background: url("data:image/svg+xml,%3Csvg xmlns='http://www.w3.org/2000/svg' width='11' height='11'%3E%3Cpath d='M2 5l3 3 5-6' fill='none' stroke='%23333'/%3E%3C/svg%3E"); }
td input[type=checkbox]:disabled { opacity: .4; }
td button { display: block; width: 10px; height: 16px; margin-top: 1px; background: #e0e0e0; border: 1px solid #999; }
td .edit { width: 108px; background: #cbcbcb; border-color: #b8b8b8; color: #8a8a8a; line-height: 14px; }
.pscroll { width: 16px; margin-left: 1px; display: flex; flex-direction: column; align-items: center; padding-bottom: 5px; }
.pscroll i { width: 15px; height: 403px; margin: 92px 0 auto; background: #cbcbcb; }
.props footer { height: 26px; display: flex; justify-content: space-between; padding: 2px 3px 3px 2px; }
.props a { color: #1a5fb4; line-height: 20px; }
.props footer button { width: 73px; background: #cbcbcb; border: 1px solid #bcbcbc; color: #8a8a8a; }

.work { display: flex; flex-direction: column; min-height: 0; border-right: 2px solid #cbcbcb; background: #fff; }
.viewtabs { display: flex; height: 20px; background: #cbcbcb; color: #444; }
.viewtabs button { display: flex; width: 128px; align-items: center; gap: 7px; padding-left: 5px; color: #555; flex: none; }
.viewtabs .first { padding-left: 48px; }
.viewtabs .cur { background: #fff; color: #111; font-weight: 600; }
.viewtabs .x { margin: 0 5px 0 auto; }
.viewtabs .more { margin: 6px 8px 0 auto; }
.canvas { flex: 1; min-height: 0; display: flex; position: relative; }
.model { flex: 1; min-width: 0; height: 100%; margin-right: 1px; }
.dimtext { font-size: 10px; fill: #1a44a8; }
.face { font-size: 11px; font-weight: 700; fill: #999; }
.sm { font-size: 9px; }
.compass { font-size: 15px; fill: #e4e4e4; stroke: #999; stroke-width: 1px; }
.navbar { position: absolute; right: 19px; top: 173px; }
.cscroll { margin-right: 2px; }
.cscroll i { width: 15px; height: 17px; margin: auto; background: #cbcbcb; }
.viewbar { flex: none; height: 18px; display: flex; align-items: center; background: #efefef; margin: 0 2px; border-bottom: 2px solid #fff; }
.scale { width: 79px; padding-left: 24px; text-align: left; white-space: nowrap; color: #111; }
.vicons { display: flex; gap: 5px; }
.lt { margin-left: 8px; }
.hscroll { flex: 1; padding-left: 435px; }
.hscroll i { display: block; width: 17px; height: 16px; background: #cbcbcb; }
.sizer { margin: 0 3px 0 10px; }

.browser { min-height: 0; overflow: hidden; display: flex; flex-direction: column; background: #fff; color: #111; white-space: nowrap; }
.browser h2 { flex: none; background: #efefef; padding-left: 4px; color: #333; }
.tree { flex: 1; min-height: 0; overflow: hidden; background: repeating-linear-gradient(#999 0 1px, transparent 1px 3px) 10px 10px / 1px 100% no-repeat; }
.tree li { height: 18px; line-height: 18px; display: flex; align-items: center; gap: 6px; background: no-repeat; }
.tree li::before { content: ""; flex: none; width: 9px; height: 9px; margin-right: 4px; }
.plus::before, .minus::before { border: 1px solid #8a93a5; border-radius: 1px; background: linear-gradient(#334, #334) center / 5px 1px no-repeat #fff; }
.tree .plus::before { background: linear-gradient(#334, #334) center / 5px 1px no-repeat, linear-gradient(#334, #334) center / 1px 5px no-repeat, #fff; }
.l0 { padding-left: 6px; }
.tree .l0::before { margin-right: 1px; }
.l1 { padding-left: 26px; } .l2 { padding-left: 46px; } .l3 { padding-left: 66px; }
.tree .l1, .tree .l2, .tree .l3 { gap: 4px; background-image: repeating-linear-gradient(90deg, #999 0 1px, transparent 1px 2px), repeating-linear-gradient(#999 0 1px, transparent 1px 2px); background-repeat: no-repeat; background-size: 9px 1px, 1px 18px; }
.tree .l1::before, .tree .l2::before, .tree .l3::before { margin-right: 7px; }
.tree .l1 { background-position: 36px 9px, 30px 0; }
.tree .l2 { background-position: 56px 9px, 50px 0; }
.tree .l3 { background-position: 76px 9px, 70px 0; }
.tree .leaf { margin-left: 90px; border-left: 1px dotted #888; border-right: 1px dashed #333; background: repeating-linear-gradient(90deg, #999 0 1px, transparent 1px 2px) 0 9px / 100% 1px no-repeat; }
.tree .leaf::before { display: none; }
.hi { background: #e2e2e2; flex: 1; padding-left: 3px; margin-left: -2px; }

.status { flex: none; height: 25px; display: flex; align-items: center; color: #222; }
.msg { width: 893px; }
.status select { width: 205px; height: 20px; color: #777; }
.s1 { margin: 0 8px; }
.cnt { width: 38px; padding-left: 4px; }
.ed { margin-right: 10px; }
.s2 { margin-left: 8px; }
.taskbar { flex: none; height: 4px; background: linear-gradient(90deg, transparent 342px, #555 342px 390px, transparent 390px), #22232a; }
.ink { position: absolute; left: 0; top: 0; z-index: 3; pointer-events: none; }
```
